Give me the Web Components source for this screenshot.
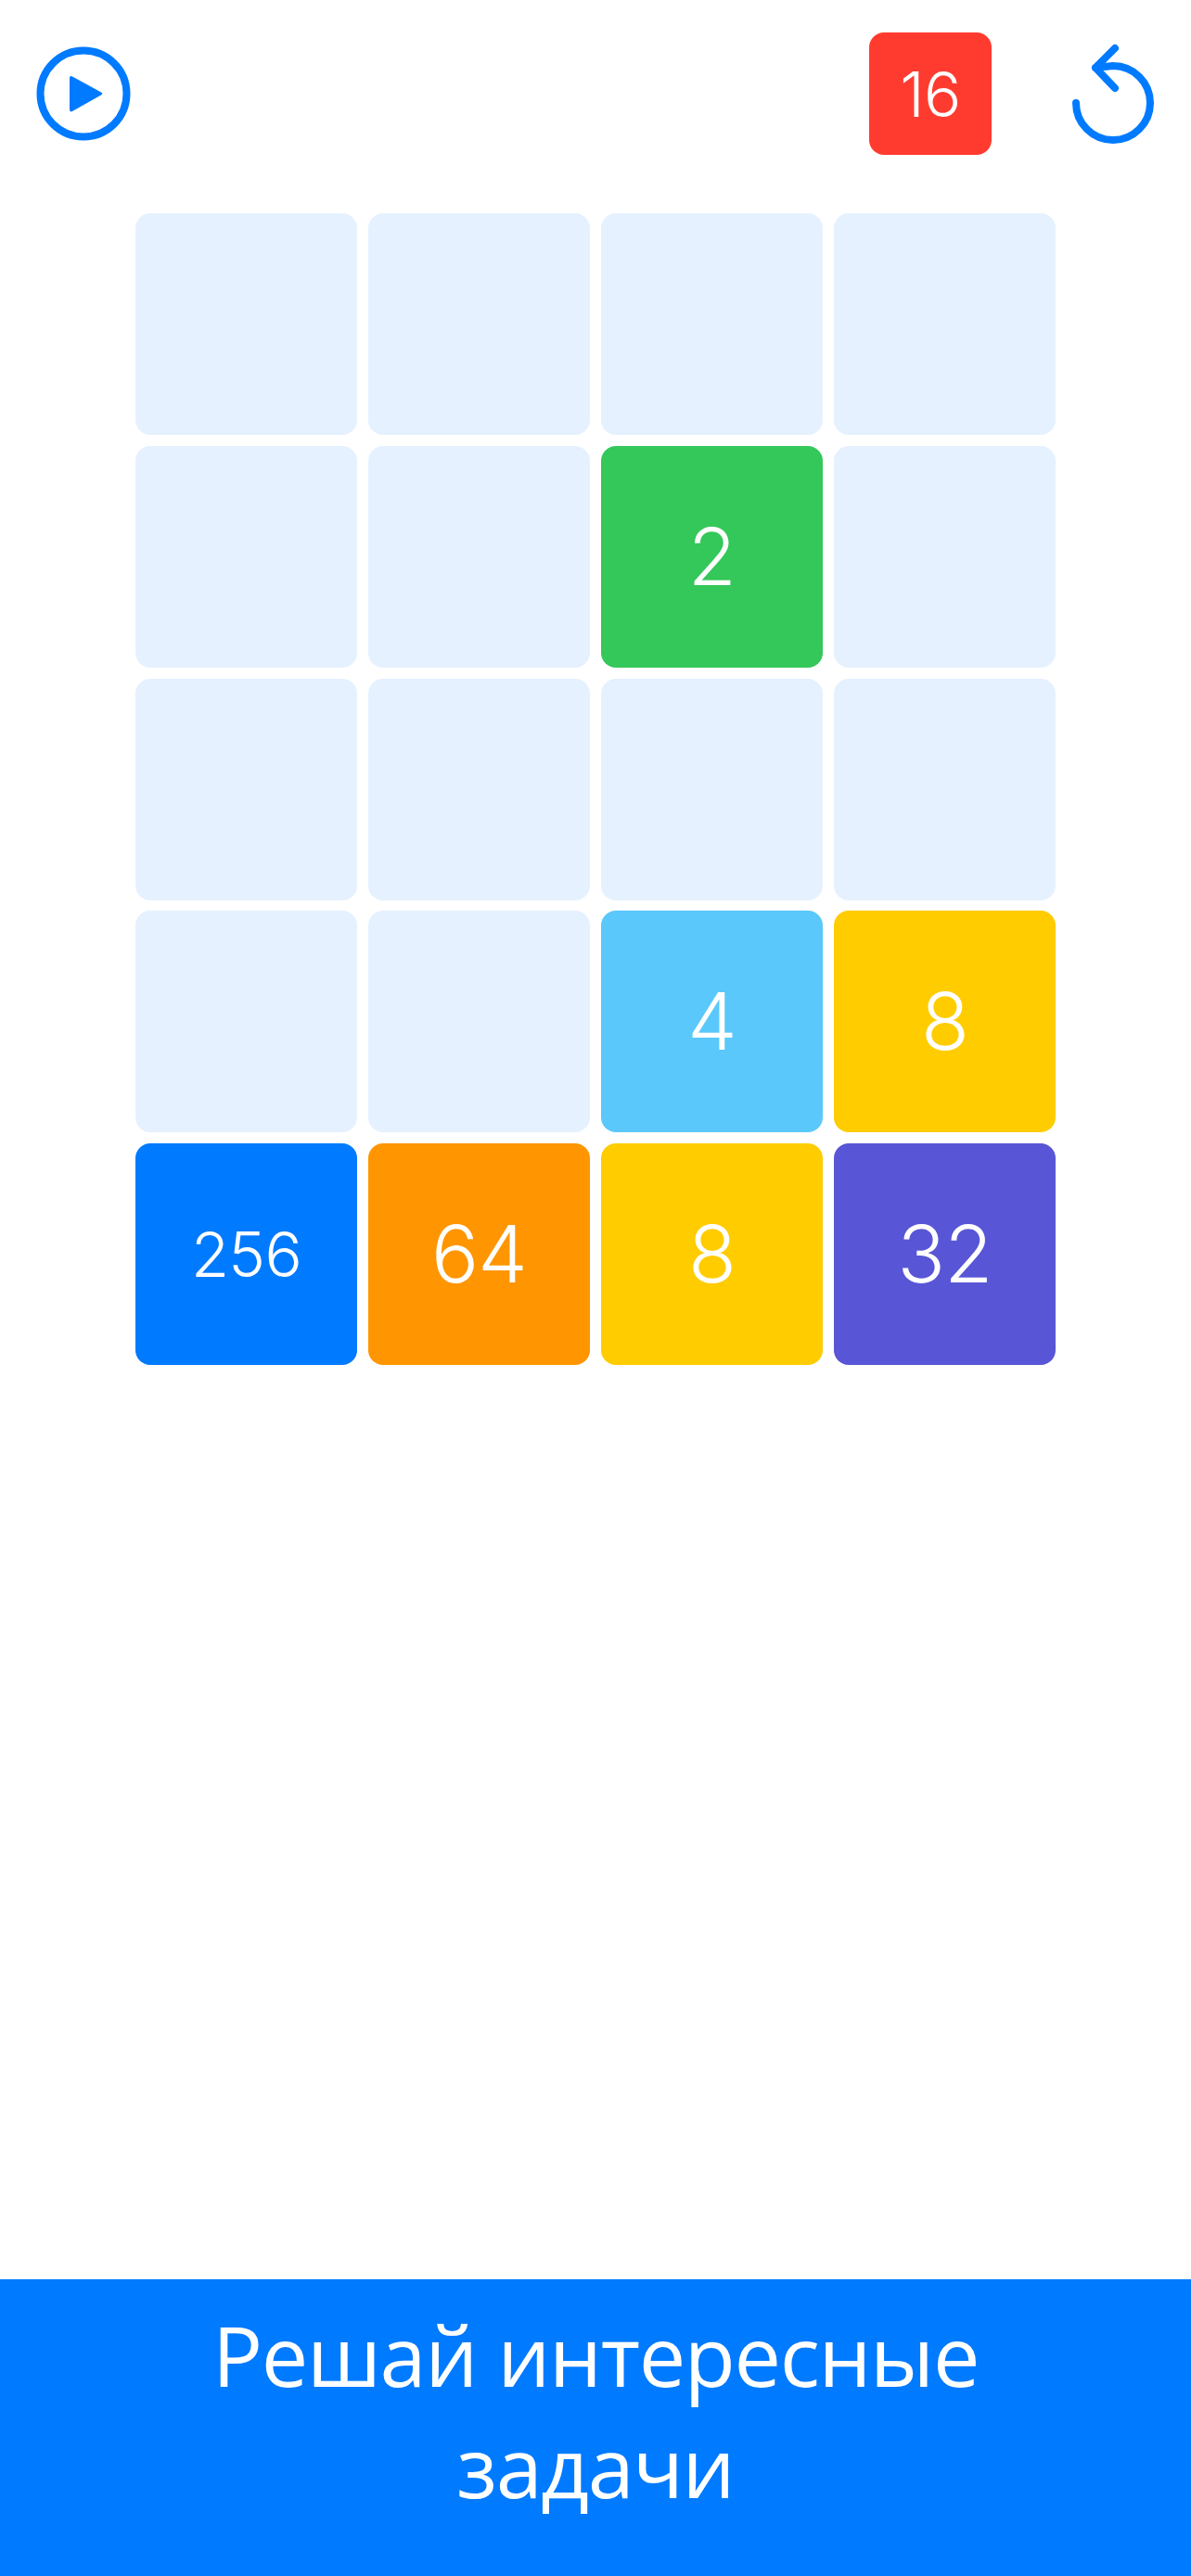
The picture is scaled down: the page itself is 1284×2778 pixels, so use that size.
<!DOCTYPE html>
<html lang="ru">
<head>
<meta charset="utf-8">
<title>2048</title>
<style>
    html, body { margin: 0; padding: 0; background: #fff; }
    body { width: 1284px; height: 2778px; overflow: hidden; display: flex; flex-direction: column; }
</style>
</head>
<body>
<game-header score="16"></game-header>
<game-board>
    <game-tile></game-tile><game-tile></game-tile><game-tile></game-tile><game-tile></game-tile>
    <game-tile></game-tile><game-tile></game-tile><game-tile color="#34C759">2</game-tile><game-tile></game-tile>
    <game-tile></game-tile><game-tile></game-tile><game-tile></game-tile><game-tile></game-tile>
    <game-tile></game-tile><game-tile></game-tile><game-tile color="#5AC8FA">4</game-tile><game-tile color="#FFCC00">8</game-tile>
    <game-tile color="#007AFF" small>256</game-tile><game-tile color="#FF9500">64</game-tile><game-tile color="#FFCC00">8</game-tile><game-tile color="#5856D6">32</game-tile>
</game-board>
<promo-banner>Решай интересные<br>задачи</promo-banner>

<script>
// single cell of the board, empty when nothing is slotted
class GameTile extends HTMLElement {
    constructor() {
        super();
        const shadow = this.attachShadow({ mode: 'open' });
        shadow.innerHTML = `
            <style>
                :host {
                    display: flex;
                    align-items: center;
                    justify-content: center;
                    width: var(--tile-size, 239px);
                    height: var(--tile-size, 239px);
                    border-radius: 16px;
                    background: var(--tile-color, #E5F1FF);
                    color: #fff;
                    font-family: Inter, "Liberation Sans", sans-serif;
                    font-weight: 300;
                    font-size: var(--tile-font, 85px);
                    letter-spacing: -0.01em;
                    line-height: 1;
                }
                :host([small]) { font-size: 67px; }
            </style>
            <slot></slot>
        `;
    }

    connectedCallback() {
        const color = this.getAttribute('color');
        if (color) this.style.setProperty('--tile-color', color);
    }
}

class GameHeader extends HTMLElement {
    constructor() {
        super();
        const shadow = this.attachShadow({ mode: 'open' });
        shadow.innerHTML = `
            <style>
                :host {
                    display: flex;
                    align-items: center;
                    height: 202px;
                    margin-bottom: 28px;
                    padding: 0 34px 0 39px;
                }
                svg { display: block; flex: none; }
                .score {
                    margin-left: auto;
                    margin-right: 81px;
                    --tile-size: 132px;
                    --tile-font: 67px;
                    --tile-color: #FF3B30;
                }
            </style>
            <svg width="102" height="102" viewBox="0 0 102 102">
                <circle cx="51" cy="51" r="46.5" fill="none" stroke="#007AFF" stroke-width="8"/>
                <path d="M39 32.5 L70 49.5 Q72.5 51 70 52.5 L39 70 Q36 71.5 36 68 V34.5 Q36 31 39 32.5 Z" fill="#007AFF"/>
            </svg>
            <game-tile class="score"></game-tile>
            <svg width="100" height="120" viewBox="0 0 100 120">
                <path d="M10 70 A40 40 0 1 0 50 30 L31 32 M52 11 L31 32 L52 54" fill="none" stroke="#007AFF" stroke-width="8" stroke-linecap="round" stroke-linejoin="round"/>
            </svg>
        `;
        shadow.querySelector('.score').textContent = this.getAttribute('score');
    }
}

class GameBoard extends HTMLElement {
    constructor() {
        super();
        const shadow = this.attachShadow({ mode: 'open' });
        shadow.innerHTML = `
            <style>
                :host {
                    display: grid;
                    grid-template-columns: repeat(4, 239px);
                    gap: 11.75px 12px;
                    justify-content: start;
                    padding-left: 146px;
                }
            </style>
            <slot></slot>
        `;
    }
}

class PromoBanner extends HTMLElement {
    constructor() {
        super();
        const shadow = this.attachShadow({ mode: 'open' });
        shadow.innerHTML = `
            <style>
                :host {
                    display: flex;
                    align-items: center;
                    justify-content: center;
                    box-sizing: border-box;
                    height: 320px;
                    margin-top: auto;
                    padding-bottom: 38px;
                    background: #007AFF;
                    color: #fff;
                    font-family: "Open Sans", "Noto Sans", sans-serif;
                    font-weight: 400;
                    font-size: 90px;
                    letter-spacing: -0.015em;
                    line-height: 120px;
                    text-align: center;
                }
            </style>
            <div><slot></slot></div>
        `;
    }
}

customElements.define('game-tile', GameTile);
customElements.define('game-header', GameHeader);
customElements.define('game-board', GameBoard);
customElements.define('promo-banner', PromoBanner);
</script>
</body>
</html>
